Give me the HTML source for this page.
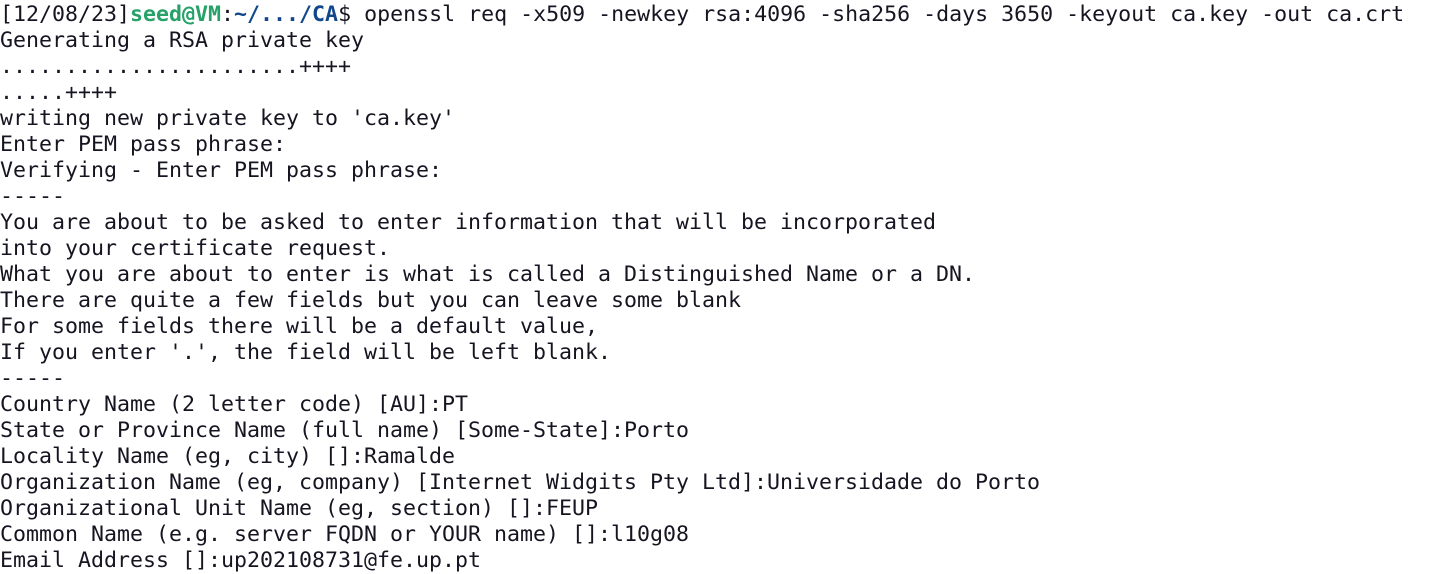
<!DOCTYPE html>
<html><head><meta charset="utf-8"><style>
html,body{margin:0;padding:0;background:#fff;}
body{width:1447px;height:573px;overflow:hidden;}
pre{margin:0;padding:2px 0 0 0;font-family:"DejaVu Sans Mono","Liberation Mono",monospace;font-size:21.6px;line-height:26px;color:#171421;white-space:pre;}
.g{color:#26a269;font-weight:bold;}
.b{color:#12488b;font-weight:bold;}
</style></head><body><pre>[12/08/23]<span class="g">seed@VM</span>:<span class="b">~/.../CA</span>$ openssl req -x509 -newkey rsa:4096 -sha256 -days 3650 -keyout ca.key -out ca.crt
Generating a RSA private key
.......................++++
.....++++
writing new private key to 'ca.key'
Enter PEM pass phrase:
Verifying - Enter PEM pass phrase:
-----
You are about to be asked to enter information that will be incorporated
into your certificate request.
What you are about to enter is what is called a Distinguished Name or a DN.
There are quite a few fields but you can leave some blank
For some fields there will be a default value,
If you enter '.', the field will be left blank.
-----
Country Name (2 letter code) [AU]:PT
State or Province Name (full name) [Some-State]:Porto
Locality Name (eg, city) []:Ramalde
Organization Name (eg, company) [Internet Widgits Pty Ltd]:Universidade do Porto
Organizational Unit Name (eg, section) []:FEUP
Common Name (e.g. server FQDN or YOUR name) []:l10g08
Email Address []:up202108731@fe.up.pt</pre></body></html>
